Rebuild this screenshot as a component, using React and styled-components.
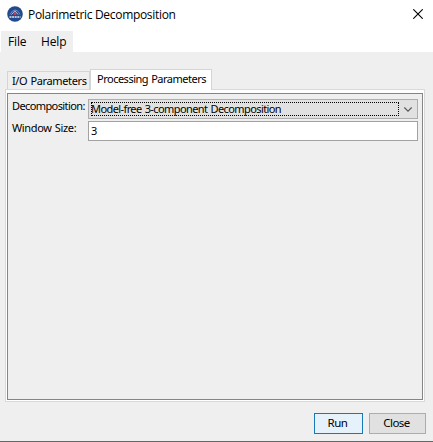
import styled, { createGlobalStyle } from "styled-components";
import { useState } from "react";

const App = () => {
  const [windowSize, setWindowSize] = useState("3");

  return (
    <>
      <GlobalStyle />
      <Dialog>
        <TitleBar>
          <AppIcon />
          <Title>Polarimetric Decomposition</Title>
          <CloseIcon />
        </TitleBar>
        <MenuBar>
          <MenuItem $width={33}>File</MenuItem>
          <MenuItem $width={39}>Help</MenuItem>
        </MenuBar>
        <Content>
          <TabList>
            <Tab $width={83}>
              <Label $spacing={-0.38}>I/O Parameters</Label>
            </Tab>
            <Tab $width={122} $active>
              <Label $spacing={-0.5}>Processing Parameters</Label>
            </Tab>
          </TabList>
          <TabFrame>
            <TabPanel>
              <FieldLabel>
                <Label $spacing={-0.6}>Decomposition:</Label>
              </FieldLabel>
              <ComboBox>
                <ComboValue>
                  <Label $spacing={-0.59}>Model-free 3-component Decomposition</Label>
                </ComboValue>
                <ChevronIcon />
              </ComboBox>
              <FieldLabel>
                <Label $spacing={-0.36}>Window Size:</Label>
              </FieldLabel>
              <TextField
                value={windowSize}
                onChange={(e) => setWindowSize(e.target.value)}
              />
            </TabPanel>
          </TabFrame>
        </Content>
        <Footer>
          <Button $width={49} $primary>
            <Label $spacing={-0.5}>Run</Label>
          </Button>
          <Button $width={57}>
            <Label $spacing={-0.5}>Close</Label>
          </Button>
        </Footer>
      </Dialog>
    </>
  );
};

export default App;

const AppIcon = () => (
  <svg width="16" height="16" viewBox="0 0 16 16">
    <circle cx="8" cy="8" r="7.8" fill="#234a8c" />
    <path d="M3 8.5Q5 4 8.5 4Q11.5 4.5 13 8.5" fill="none" stroke="#6a8ac0" strokeWidth="1" />
    <path d="M4.5 8.5L8 4.8L11 8.5" fill="none" stroke="#c3d0e6" strokeWidth="0.9" />
    <circle cx="8" cy="7.7" r="1.4" fill="#c8405a" />
    <path d="M2.5 11H13.5" stroke="#dfe6f2" strokeWidth="1.6" strokeDasharray="2 0.6" />
  </svg>
);

const CloseIcon = () => (
  <svg width="10" height="10" viewBox="0 0 10 10">
    <path d="M0.3 0.3L9.7 9.7M9.7 0.3L0.3 9.7" stroke="#000" strokeWidth="1.1" />
  </svg>
);

const ChevronIcon = () => (
  <svg width="8" height="5" viewBox="0 0 8 5">
    <path d="M0.3 0.4L4 4.1L7.7 0.4" fill="none" stroke="#555" strokeWidth="1.1" />
  </svg>
);

const GlobalStyle = createGlobalStyle`
  body {
    margin: 0;
    overflow: hidden;
  }

  * {
    box-sizing: border-box;
  }
`;

const Dialog = styled.div`
  display: flex;
  flex-direction: column;
  width: 433px;
  height: 442px;
  padding-bottom: 8px;
  background-color: #efefef;
  background-image: linear-gradient(#666, #666);
  background-size: 100% 1px;
  background-position: bottom;
  background-repeat: no-repeat;
  color: #000;
  font-family: "Noto Sans", sans-serif;
  font-size: 11px;
`;

const TitleBar = styled.header`
  display: flex;
  align-items: center;
  height: 31px;
  padding: 0 10px 3px 7px;
  background-color: white;
`;

const Title = styled.h1`
  flex: 1;
  margin: 2px 0 0 5px;
  font-family: "Open Sans", sans-serif;
  font-size: 12px;
  font-weight: 400;
  letter-spacing: -0.31px;
  line-height: 16px;
  white-space: nowrap;
`;

const MenuBar = styled.nav`
  display: flex;
  height: 21px;
  padding-left: 1px;
  background-color: white;
`;

const MenuItem = styled.div`
  width: ${(props) => props.$width}px;
  padding-left: 7px;
  background-color: #efefef;
  font-family: "Open Sans", sans-serif;
  font-size: 12px;
  letter-spacing: -0.15px;
  line-height: 21px;
`;

const Content = styled.main`
  display: flex;
  flex: 1;
  flex-direction: column;
  padding: 17px 8px 0 5px;
`;

const TabList = styled.div`
  display: flex;
  align-items: flex-end;
  height: 20px;
  padding-left: 2px;
`;

const Tab = styled.div`
  position: relative;
  width: ${(props) => props.$width}px;
  height: ${(props) => (props.$active ? 21 : 18)}px;
  margin-bottom: ${(props) => (props.$active ? -1 : 0)}px;
  padding-left: ${(props) => (props.$active ? 6 : 4)}px;
  border: 1px solid #d5d5d5;
  border-bottom: 0;
  background-color: ${(props) => (props.$active ? "white" : "#efefef")};
  line-height: 18px;
`;

const Label = styled.span`
  letter-spacing: ${(props) => props.$spacing}px;
  word-spacing: 0.8px;
  white-space: nowrap;
`;

const TabFrame = styled.section`
  height: 313px;
  padding: 3px 1px 1px;
  border: 1px solid #d9d9d9;
  background-color: white;
`;

const TabPanel = styled.div`
  display: grid;
  grid-template-columns: 76px 330px;
  grid-template-rows: 20px 20px;
  row-gap: 2px;
  height: 100%;
  padding: 5px 4px;
  border: 1px solid #858585;
  background-color: #efefef;
`;

const FieldLabel = styled.label`
  line-height: 14px;
`;

const ComboBox = styled.div`
  display: flex;
  align-items: center;
  justify-content: space-between;
  padding: 0 5px 0 2px;
  border: 1px solid #adadad;
  background-color: #e1e1e1;
`;

const ComboValue = styled.div`
  width: 308px;
  height: 14px;
  border: 1px dotted #000;
  line-height: 12px;
  text-indent: -1px;
`;

const TextField = styled.input`
  width: 100%;
  height: 20px;
  padding: 0 2px 1px;
  border: 1px solid #a2a2a2;
  outline: 0;
  background-color: white;
  font: inherit;
`;

const Footer = styled.footer`
  display: flex;
  justify-content: flex-end;
  gap: 6px;
  padding-right: 7px;
`;

const Button = styled.button`
  width: ${(props) => props.$width}px;
  height: 21px;
  padding: 0 2px 1px 0;
  border: 1px solid ${(props) => (props.$primary ? "#1979b8" : "#adadad")};
  background-color: ${(props) => (props.$primary ? "#e5f1fb" : "#e1e1e1")};
  color: #000;
  font-family: "Noto Sans", sans-serif;
  font-size: 11.5px;
  line-height: 18px;
`;
